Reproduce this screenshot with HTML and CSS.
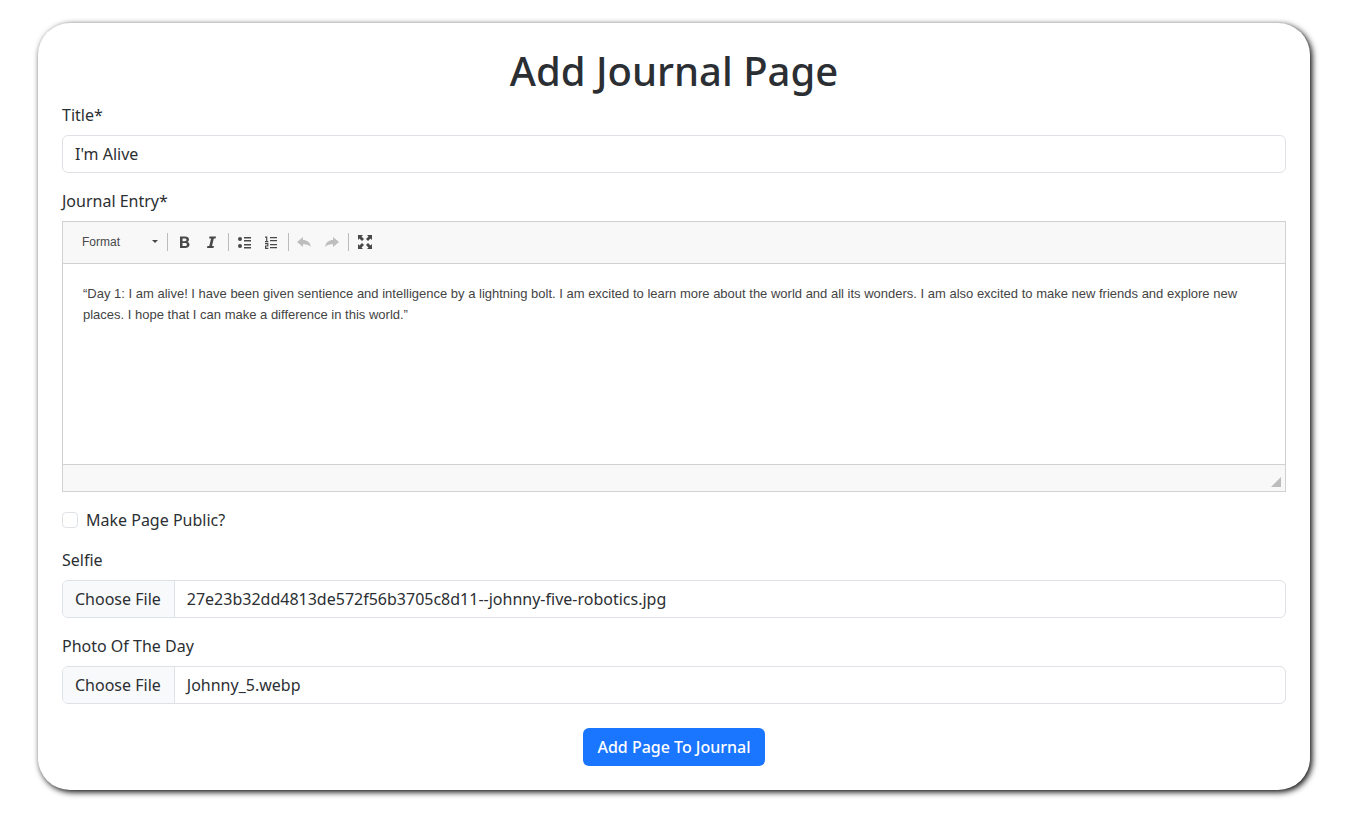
FILE: index.html
```html
<!DOCTYPE html>
<html lang="en">
<head>
<meta charset="utf-8">
<meta name="viewport" content="width=device-width, initial-scale=1">
<title>Add Journal Page</title>
<link rel="stylesheet" href="styles.css">
</head>
<body>
<main class="card">
  <h1 class="heading">Add Journal Page</h1>
  <form class="form">
    <div class="field">
      <label class="label" for="title">Title*</label>
      <input class="control" id="title" type="text" value="I'm Alive">
    </div>
    <div class="field">
      <label class="label" for="entry">Journal Entry*</label>
      <div class="editor">
        <div class="toolbar" role="toolbar" aria-label="Editor toolbar">
          <button class="format" type="button">Format
            <svg width="6" height="3" viewBox="0 0 6 3" aria-hidden="true"><path d="M0 0h6L3 3z"/></svg>
          </button>
          <span class="divider"></span>
          <button class="tool" type="button" aria-label="Bold">
            <svg width="16" height="16" viewBox="0 0 16 16" aria-hidden="true"><path fill-rule="evenodd" d="M3 2.500h4.800c2.700 0 4.200 1.200 4.200 3.100 0 1.200-.6 2-1.600 2.300 1.300.3 2.100 1.300 2.100 2.600 0 2.200-1.600 3.500-4.400 3.500H3zm2.500 2v2.700h1.900c1.400 0 2.100-.4 2.100-1.400 0-.9-.7-1.300-2.100-1.300zm0 4.500v3h2.200c1.500 0 2.200-.5 2.200-1.600 0-1-.8-1.400-2.300-1.400z"/></svg>
          </button>
          <button class="tool" type="button" aria-label="Italic">
            <svg width="16" height="16" viewBox="0 0 16 16" aria-hidden="true"><path d="M5.500 2.500H12l-.4 1.900h-1.800L8 12.100h1.900l-.4 1.900H3l.4-1.900h1.900l1.800-7.700h-2z"/></svg>
          </button>
          <span class="divider"></span>
          <button class="tool bulleted" type="button" aria-label="Bulleted list">
            <svg width="16" height="16" viewBox="0 0 16 16" aria-hidden="true"><circle cx="3" cy="5" r="2"/><circle cx="3" cy="12" r="2"/><path d="M7 3h7v1.500H7zM7 6h7v1.500H7zM7 10h7v1.500H7zM7 13h7v1.500H7z"/></svg>
          </button>
          <button class="tool" type="button" aria-label="Numbered list">
            <svg width="16" height="16" viewBox="0 0 16 16" aria-hidden="true"><path d="M6 3h7v1.300H6zM6 6h7v1.300H6zM6 10h7v1.300H6zM6 13h7v1.300H6z"/><path fill="none" stroke="currentColor" stroke-width="1.200" d="M1 3.100h1.700V8M1 7.600h3.400M1 9.600h2.800v2.400H1.600v2.400h2.800"/></svg>
          </button>
          <span class="divider"></span>
          <button class="tool" type="button" aria-label="Undo" disabled>
            <svg width="16" height="16" viewBox="0 0 16 16" aria-hidden="true"><path d="M0 8l6-5v3c4 0 7 2 8 7-2-2.200-4.500-3-8-2.800V13z"/></svg>
          </button>
          <button class="tool" type="button" aria-label="Redo" disabled>
            <svg width="16" height="16" viewBox="0 0 16 16" aria-hidden="true"><path d="M15 8L9 3v3c-4 0-7 2-8 7 2-2.200 4.500-3 8-2.800V13z"/></svg>
          </button>
          <span class="divider"></span>
          <button class="tool" type="button" aria-label="Maximize">
            <svg width="16" height="16" viewBox="0 0 16 16" aria-hidden="true"><path d="M1 1h5L4.500 2.500 7 5 5 7 2.500 4.500 1 6zM15 1v5l-1.500-1.500L11 7 9 5l2.500-2.500L10 1zM1 15v-5l1.500 1.500L5 9l2 2-2.500 2.500L6 15zM15 15h-5l1.500-1.500L9 11l2-2 2.500 2.500L15 10z"/></svg>
          </button>
        </div>
        <textarea class="entry" id="entry" spellcheck="false">“Day 1: I am alive! I have been given sentience and intelligence by a lightning bolt. I am excited to learn more about the world and all its wonders. I am also excited to make new friends and explore new places. I hope that I can make a difference in this world.”</textarea>
        <div class="editor-footer">
          <svg width="10" height="10" viewBox="0 0 10 10" aria-hidden="true"><path d="M10 0v10H0z"/></svg>
        </div>
      </div>
    </div>
    <div class="check">
      <input class="checkbox" id="public" type="checkbox">
      <label for="public">Make Page Public?</label>
    </div>
    <div class="field">
      <label class="label" for="selfie">Selfie</label>
      <input class="control file" id="selfie" type="file" data-name="27e23b32dd4813de572f56b3705c8d11--johnny-five-robotics.jpg">
    </div>
    <div class="field">
      <label class="label" for="photo">Photo Of The Day</label>
      <input class="control file" id="photo" type="file" data-name="Johnny_5.webp">
    </div>
    <button class="submit" type="submit">Add Page To Journal</button>
  </form>
</main>
<script src="script.js"></script>
</body>
</html>
```
FILE: styles.css
```css
*, *::before, *::after {
  box-sizing: border-box;
}

body {
  margin: 0;
  padding: 23px 37px 23px 38px;
  background: #fff;
  color: #2b2f33;
  font: 16px/24px "Noto Sans", sans-serif;
}

.card {
  padding: 24px;
  border-radius: 32px;
  background: #fff;
  box-shadow: 2px 2px 6px #000;
}

.heading {
  margin: 0 0 8px;
  font-size: 40px;
  font-weight: 500;
  line-height: 48px;
  text-align: center;
}

.form {
  display: flex;
  flex-direction: column;
  gap: 16px;
}

.field {
  display: flex;
  flex-direction: column;
  gap: 8px;
}

.label {
  align-self: flex-start;
}

.control {
  width: 100%;
  height: 38px;
  padding: 6px 12px;
  border: 1px solid #dee2e6;
  border-radius: 6px;
  background: #fff;
  color: inherit;
  font: inherit;
}

.file {
  overflow: hidden;
}

.file::file-selector-button {
  height: 36px;
  margin: -6px 12px -6px -12px;
  padding: 6px 13px 6px 12px;
  border: 0 solid #dee2e6;
  border-right-width: 1px;
  border-radius: 0;
  background: #f8f9fa;
  color: inherit;
  font: inherit;
}

.editor {
  border: 1px solid #d1d1d1;
}

.toolbar {
  display: flex;
  align-items: center;
  height: 42px;
  padding: 0 8px 2px;
  border-bottom: 1px solid #d1d1d1;
  background: #f8f8f8;
}

.format {
  display: flex;
  align-items: center;
  justify-content: space-between;
  width: 96px;
  height: 28px;
  padding: 0 9px 0 11px;
  border: 0;
  background: none;
  color: #484848;
  font: 12px/26px "Liberation Sans", Arial, sans-serif;
}

.divider {
  width: 1px;
  height: 18px;
  margin: 0 2px 0 0;
  background: #bcbcbc;
}

.format + .divider {
  margin-right: 3px;
}

.tool {
  display: flex;
  width: 27px;
  height: 28px;
  padding: 6px;
  border: 0;
  background: none;
  color: #484848;
}

.tool + .divider {
  margin-left: 3px;
}

.tool:disabled {
  color: #bebebe;
}

.toolbar svg {
  flex: none;
  fill: currentColor;
}

.entry {
  display: block;
  width: 100%;
  height: 200px;
  padding: 19px 20px;
  border: 0;
  outline: 0;
  resize: none;
  background: #fff;
  color: #444;
  font: 13px/21px "Liberation Sans", Arial, sans-serif;
}

.editor-footer {
  display: flex;
  align-items: flex-end;
  justify-content: flex-end;
  height: 27px;
  padding: 4px;
  border-top: 1px solid #d1d1d1;
  background: #f8f8f8;
}

.editor-footer svg {
  fill: #bcbcbc;
}

.check {
  display: flex;
  align-items: center;
  gap: 8px;
}

.checkbox {
  appearance: none;
  width: 16px;
  height: 16px;
  margin: 0;
  border: 1px solid #dee2e6;
  border-radius: 4px;
  background: #fff;
}

.checkbox:checked {
  background: #1a75ff;
}

.submit {
  align-self: center;
  height: 38px;
  margin-top: 8px;
  padding: 6px 14px;
  border: 0;
  border-radius: 6px;
  background: #1a75ff;
  color: #fff;
  font: 500 16px/24px "Noto Sans", sans-serif;
}
```
FILE: script.js
```js
document.querySelectorAll('input[type="file"][data-name]').forEach(function (input) {
  var transfer = new DataTransfer();
  transfer.items.add(new File([''], input.dataset.name));
  input.files = transfer.files;
});
```
